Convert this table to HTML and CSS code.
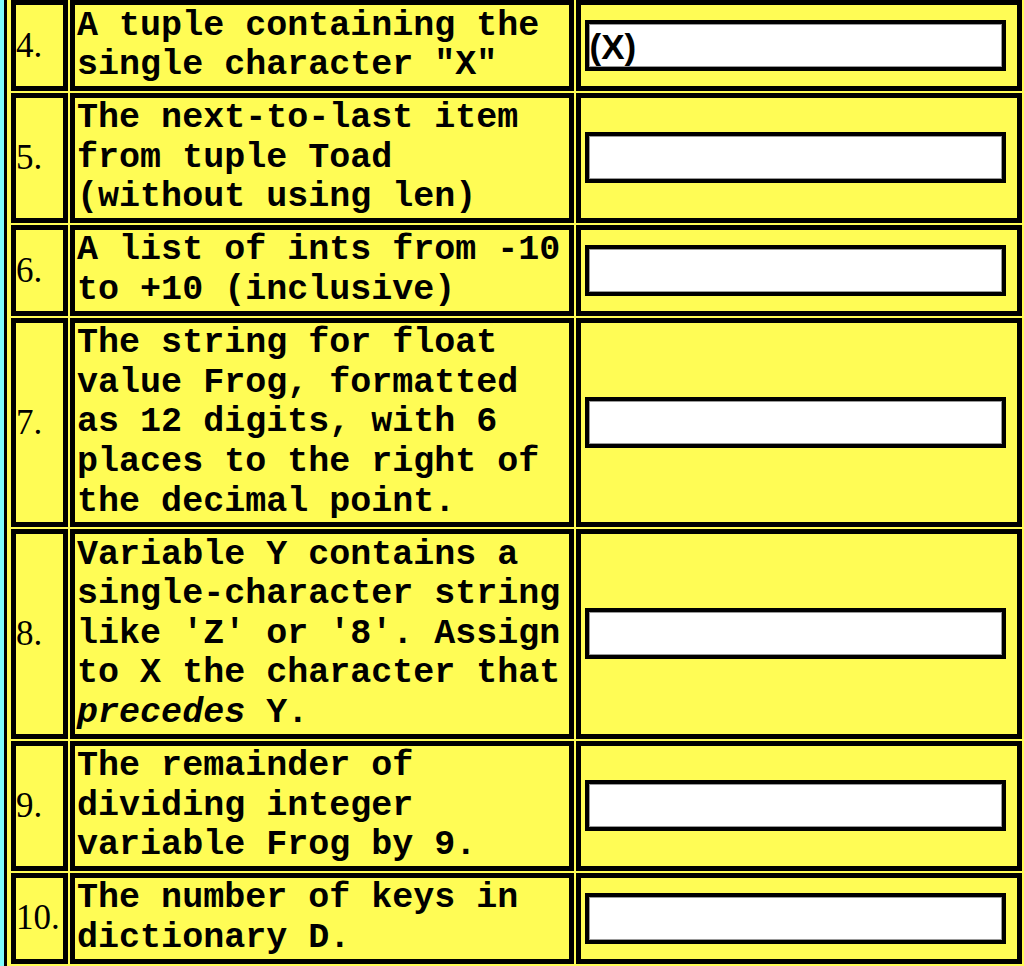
FILE: index.html
```html
<!DOCTYPE html>
<html lang="en">
<head>
<meta charset="utf-8">
<title>Quiz</title>
<link rel="stylesheet" href="styles.css">
</head>
<body>
<table class="quiz">
  <tr>
    <td class="num">4.</td>
    <td class="desc">A tuple containing the single character "X"</td>
    <td class="ans"><input class="field" type="text" value="(X)"></td>
  </tr>
  <tr>
    <td class="num">5.</td>
    <td class="desc">The next-to-last item from tuple Toad (without using len)</td>
    <td class="ans"><input class="field" type="text" value=""></td>
  </tr>
  <tr>
    <td class="num">6.</td>
    <td class="desc">A list of ints from -10 to +10 (inclusive)</td>
    <td class="ans"><input class="field" type="text" value=""></td>
  </tr>
  <tr>
    <td class="num">7.</td>
    <td class="desc">The string for float value Frog, formatted as 12 digits, with 6 places to the right of the decimal point.</td>
    <td class="ans"><input class="field" type="text" value=""></td>
  </tr>
  <tr>
    <td class="num">8.</td>
    <td class="desc">Variable Y contains a single-character string like 'Z' or '8'. Assign to X the character that <em>precedes</em> Y.</td>
    <td class="ans"><input class="field" type="text" value=""></td>
  </tr>
  <tr>
    <td class="num">9.</td>
    <td class="desc">The remainder of dividing integer variable Frog by 9.</td>
    <td class="ans"><input class="field" type="text" value=""></td>
  </tr>
  <tr>
    <td class="num">10.</td>
    <td class="desc">The number of keys in dictionary D.</td>
    <td class="ans"><input class="field" type="text" value=""></td>
  </tr>
</table>
</body>
</html>
```
FILE: styles.css
```css
html, body {
  margin: 0;
  padding: 0;
  overflow: hidden;
  background: #7ffcfc;
}

.quiz {
  margin: -6.5px 0 0 4px;
  border: 3px solid #000;
  padding: 1.5px;
  border-collapse: separate;
  border-spacing: 2.5px;
  background: #fffc55;
  table-layout: fixed;
  width: 1024px;
}

.quiz td {
  border: 5px solid #000;
  padding: 0.5px;
  background: #fffc55;
  color: #000;
}

.num {
  width: 46px;
  vertical-align: middle;
  font-family: "Liberation Serif", "Times New Roman", serif;
  font-size: 35px;
  line-height: 39.6px;
  white-space: nowrap;
}

.quiz td.desc {
  width: 490px;
  padding: 1.5px 0.5px 0 2.5px;
  vertical-align: top;
  font-family: "Liberation Mono", "Courier New", monospace;
  font-weight: bold;
  font-size: 35px;
  line-height: 39.6px;
}

.desc em {
  font-style: italic;
}

.ans {
  width: 434px;
  vertical-align: middle;
}

.field {
  display: block;
  box-sizing: border-box;
  width: 421px;
  height: 51px;
  margin: 0 0 0 3.5px;
  padding: 4px 0 0 1px;
  border: 4px solid #000;
  box-shadow: inset 0 0 0 1px #999;
  background: #fff;
  font-family: "Liberation Sans", Arial, sans-serif;
  font-weight: bold;
  font-size: 35px;
  color: #000;
  outline: none;
}
```
